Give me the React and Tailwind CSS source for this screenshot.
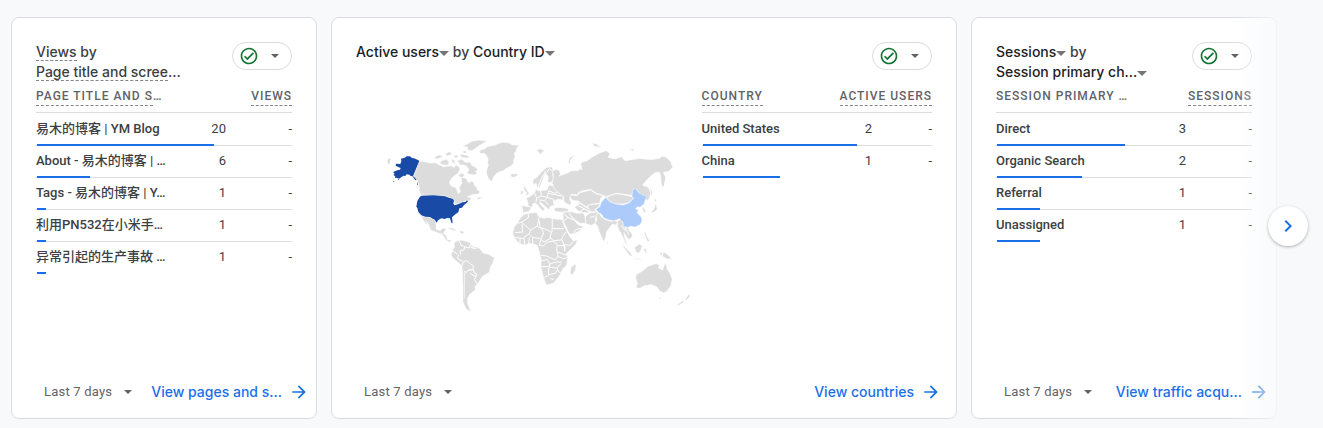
import React from "react";

const LAND = "#dcdcdc";

function Caret({ className = "" }) {
  return (
    <svg className={"inline-block shrink-0 " + className} viewBox="0 0 10 5" aria-hidden="true">
      <path d="M0 0h10L5 5z" fill="currentColor" />
    </svg>
  );
}

function StatusButton() {
  return (
    <button
      type="button"
      aria-label="Data quality"
      className="flex h-7 w-[60px] shrink-0 items-center justify-between rounded-full border border-[#dadce0] bg-white pr-3 pl-[6px]"
    >
      <svg className="size-5" viewBox="0 0 24 24" fill="#137333" aria-hidden="true">
        <path d="M12 2C6.48 2 2 6.48 2 12s4.48 10 10 10 10-4.48 10-10S17.52 2 12 2zm0 18c-4.41 0-8-3.59-8-8s3.59-8 8-8 8 3.59 8 8-3.59 8-8 8zm4.59-12.42L10 14.17l-2.59-2.58L6 13l4 4 8-8z" />
      </svg>
      <Caret className="h-1 w-2 text-[#5f6368]" />
    </button>
  );
}

function PickerButton({ children }) {
  return (
    <button type="button" className="whitespace-nowrap text-[#202124]">
      {children}
      <Caret className="h-[5px] w-[10px] align-middle text-[#757575]" />
    </button>
  );
}

function Underlined({ children }) {
  return <span className="border-b border-dashed border-[#80868b]">{children}</span>;
}

function HeaderLabel({ children }) {
  return <span className="inline-block border-b border-dashed border-[#80868b] leading-[18px]">{children}</span>;
}

function MetricTable({ dimension, metric, rows, scale, changeColumn = "w-[66px]" }) {
  const max = rows[0].value;
  const cell = "border-b border-[#dadce0] p-0 pb-0.5 group-first:pb-px group-last:border-transparent";
  return (
    <table className="w-full table-fixed border-separate border-spacing-0 text-[#3c4043]">
      <colgroup>
        <col />
        <col className="w-10" />
        <col className={changeColumn} />
      </colgroup>
      <thead>
        <tr className="h-[31px] text-[12px] tracking-[1px] whitespace-nowrap text-[#5f6368]">
          <th scope="col" className="border-b border-[#dadce0] p-0 pb-0.5 text-left align-middle font-medium">
            {dimension}
          </th>
          <th scope="col" colSpan={2} className="border-b border-[#dadce0] p-0 pb-0.5 text-right align-middle font-medium">
            <div className="flex justify-end">{metric}</div>
          </th>
        </tr>
      </thead>
      <tbody>
        {rows.map((row) => (
          <tr key={row.name} className="group relative h-8 text-[13px] leading-4 first:h-[33px]">
            <th scope="row" className={cell + " text-left font-medium whitespace-nowrap"}>
              {row.name}
              <span
                className="absolute bottom-0 left-px h-0.5 bg-[#1a6fe8]"
                style={{ width: `${(row.value / max) * scale}%` }}
              />
            </th>
            <td className={cell + " text-right"}>{row.value}</td>
            <td className={cell + " text-right"}>-</td>
          </tr>
        ))}
      </tbody>
    </table>
  );
}

function CardFooter({ label, wide = false }) {
  return (
    <div className={wide ? "mt-auto flex items-center justify-between pr-4 pl-8" : "mt-auto flex items-center justify-between pr-2 pl-8"}>
      <button type="button" className="flex items-center gap-3 text-[13px] leading-5 tracking-[0.2px] whitespace-nowrap text-[#5f6368]">
        Last 7 days
        <Caret className="h-1 w-2" />
      </button>
      <a href="#" className="flex items-center gap-2 font-['Inter','Roboto',sans-serif] text-sm leading-5 font-medium whitespace-nowrap text-[#1a6fe8]">
        {label}
        <svg className="size-[18px]" viewBox="0 0 24 24" fill="currentColor" aria-hidden="true">
          <path d="M12 3l-1.6 1.6 6.3 6.3H3v2.2h13.700l-6.300 6.300L12 21l9-9z" />
        </svg>
      </a>
    </div>
  );
}

function Card({ title, children, footer }) {
  return (
    <section className="flex min-w-0 flex-col rounded-lg border border-[#dadce0] bg-white pt-6 pb-4">
      <div className="flex items-start justify-between px-6">
        <h2 className="h-10 font-['Inter','Roboto',sans-serif] text-sm leading-5 font-medium whitespace-nowrap text-[#3c4043]">{title}</h2>
        <StatusButton />
      </div>
      <div className="px-6">{children}</div>
      {footer}
    </section>
  );
}

function WorldMap() {
  return (
    <svg viewBox="0 0 960 570" className="mt-12 ml-6 w-80 max-w-full" role="img" aria-label="Active users by country">
      <g fill={LAND} stroke="#fff" strokeWidth="1" strokeLinejoin="round">
        <path d="M118 94L140 97L150 100L165 98L178 105L190 111L200 109L215 108L222 113L228 105L236 110L240 118L234 130L222 138L212 148L208 158L213 168L228 174L235 192L241 186L238 172L246 160L243 143L258 145L262 153L268 160L272 154L280 155L284 168L290 170L290 178L299 184L296 192L280 193L262 200L274 205L268 214L262 210L250 216L236 221L224 221L222 210L207 202L195 198L124 195L118 182L117 165L111 150L101 139Z" />
        <path d="M183 94L198 88L207 96L204 105L188 104L180 100ZM163 82l14-7 12 4-8 4-12 4zM232 92L245 88L258 98L270 96L275 106L286 112L294 120L286 124L292 130L284 134L268 133L260 128L268 120L260 108L250 104L242 106ZM248 48L262 42L276 34L296 31L320 32L312 38L298 46L288 54L276 62L262 60L264 52ZM240 72l10 2 18 4-4 6-20-2zM196 72l10-6 10 3-4 6-12 2zM214 88l8 2 4 12-8-4zM236 134l8-4 10 4-6 8-10-2zM222 76l10 0 2 6-8 2zM250 62l10 2-2 6-8-2z" />
        <path d="M298 62L318 55L322 50L345 46L358 40L370 37L390 40L396 45L418 46L410 54L408 64L402 70L405 80L400 92L401 100L392 108L380 114L370 122L362 124L350 130L340 142L335 155L327 148L322 138L319 125L322 114L326 106L323 98L325 90L320 76L312 70L300 70Z" />
        <path d="M391 134l6-3 6 2 6-3 4 4-4 5-8 3-7-2zM290 204l10-2 6 1-6 4-8 0zM22 90l6-6 4 4-2 12-6 4z" />
        <path d="M124 257L136 261L150 262L158 267L166 272L168 284L168 298L180 302L188 295L199 296L190 309L183 312L168 306L152 300L146 283L138 272L144 288L132 274Z" />
        <path d="M180 309l12 2 8 8 2 10 12 2-6 6-10-8-8-12zM202 292l14 2 14 6-8 2-14-6zM238 303l10 1 6 4-10 3z" />
        <path d="M234 332L245 331L268 337L275 347L290 352L300 356L308 368L328 374L343 383L338 400L331 410L328 427L308 438L300 450L291 463L285 470L286 480L270 492L262 505L262 520L268 534L272 545L258 536L249 515L249 480L248 430L246 407L230 394L218 382L214 377L217 362L224 350L222 338Z" />
      </g>
      <g fill="none" stroke="#fff" strokeWidth="3" strokeLinejoin="round">
        <path d="M238 333L242 345L254 350L252 360L240 362L242 374M216 363L228 368L236 376L232 384L240 390L248 393M246 407L250 395L260 392L272 402L280 408L279 418L264 420L260 427L252 425M266 421L280 419L282 428L291 433L286 439L270 430M290 435L283 448L292 463M254 350L268 354L272 340M272 352L290 356M280 350v8" />
        <path strokeWidth="2" d="M252 425L254 440L253 470L253 505" />
      </g>
      <g fill="#194ba6">
        <path d="M63 86L74 83L80 79L90 79L95 83L106 86L118 92L99 139L92 138L88 134L80 133L76 138L70 137L64 142L57 146L50 143L44 144L46 139L40 135L44 131L39 126L52 121L60 119L62 114L56 112L47 107L48 101L61 102L64 94ZM97 138l5 2 8 9-4 2zM111 156l3 8-3 0zM40 153l4 2-4 1zM54 147l4 2-4 2zM124 197L160 196L195 199L207 203L219 207L222 212L220 221L224 226L236 222L248 217L256 216L261 211L264 214L260 219L252 225L246 233L238 235L235 247L226 253L216 262L218 280L214 278L210 265L202 264L194 267L184 265L174 271L170 278L164 269L158 266L150 261L136 260L124 256L115 246L112 234L109 230L112 213L117 205L120 200Z" />
      </g>
      <g transform="translate(360 0)">
        <g fill={LAND} stroke="#fff" strokeWidth="2" strokeLinejoin="round">
          <path d="M72 253L85 250L110 247L115 258L130 265L145 262L158 266L180 268L190 270L188 275L194 290L203 308L210 320L220 332L233 330L228 342L212 358L200 370L203 385L200 405L188 418L182 432L172 446L160 460L142 465L137 462L130 440L122 410L124 390L118 368L115 355L110 345L100 342L88 340L75 345L60 342L50 332L42 322L38 310L42 292L52 280L60 265Z" />
          <path d="M100 165L98 150L110 142L125 125L140 112L155 110L160 120L158 135L165 150L150 158L142 155L145 140L136 130L130 145L126 155L118 175L112 172L108 160Z" />
          <path d="M65 232L64 226L85 230L82 212L78 205L92 198L104 188L108 176L114 182L140 180L148 165L160 168L172 185L190 195L188 210L172 208L160 215L163 225L150 230L148 240L138 232L128 222L118 215L122 224L136 238L128 243L118 232L108 220L100 220L96 232L85 245L70 248L64 244Z" />
          <path d="M70 165L78 175L88 192L76 198L80 188L72 180ZM62 182l8 1-1 9-8 1z" />
          <path d="M160 236L172 232L190 233L205 236L205 244L185 247L168 245Z" />
          <path d="M188 248L206 244L212 256L222 270L232 282L250 290L240 302L222 312L208 312L200 295L190 275Z" />
          <path d="M206 244L218 246L232 250L250 248L256 262L258 280L240 280L225 270L212 256Z" />
          <path d="M224 232L240 220L255 230L272 240L268 248L250 248L236 244Z" />
          <path d="M262 230L268 224L300 221L298 230L285 238L290 246L272 245Z" />
          <path d="M256 260L270 248L288 246L297 250L286 264L288 278L275 286L258 282Z" />
          <path d="M178 122L182 133L176 138L188 134L200 130L215 122L235 122L240 115L246 120L242 100L250 95L262 92L275 82L300 68L318 62L330 70L325 82L345 86L365 80L375 92L400 88L420 85L440 88L460 88L480 84L486 78L500 82L512 95L519 112L505 125L490 127L497 142L493 165L488 173L483 160L482 140L478 126L465 128L450 140L432 160L428 165L445 172L453 190L447 208L440 212L432 197L420 192L408 177L400 177L398 196L385 195L350 190L330 196L318 200L305 195L290 190L272 178L250 182L236 187L232 195L215 193L209 205L215 222L206 224L195 218L190 210L192 200L180 192L172 185L162 175L156 160L160 140L158 122L170 118Z" />
          <path d="M215 195L232 197L238 188L272 180L290 192L310 197L302 205L300 219L280 222L268 224L258 230L240 218L232 222L238 214L222 212L216 210L210 202Z" />
          <path d="M320 202L335 195L352 191L385 197L398 200L400 205L388 217L372 222L345 222L328 214Z" />
          <path d="M288 254L298 250L304 260L314 268L335 274L345 272L354 275L347 286L338 282L330 292L320 305L318 318L313 335L308 330L298 305L292 288L285 280L290 270Z" />
          <path d="M352 275L362 268L370 280L375 292L385 294L388 302L398 315L394 325L385 328L378 318L372 308L374 322L382 345L376 340L368 320L362 308L356 300L352 288ZM318 334l6 4-3 6z" />
          <path d="M364 343L376 352L392 368L399 381L388 376L375 358ZM400 383l24 4 0 3-24-4zM404 352L418 342L427 348L422 362L416 370L407 366ZM430 357l12-3-4 6 4 10-5 0-4-8zM476 368L495 368L508 378L516 388L500 386L488 380ZM432 306l6 2 2 10 10 16-8 0-6-12z" />
          <path d="M462 206l11 3-8 7zM468 218L472 238L462 247L450 249L460 240L464 230ZM426 231l7 2 5 14-8 0zM450 168L457 185L457 202L452 190z" />
          <path d="M408 435L428 422L445 408L455 405L468 400L478 406L475 414L488 420L494 400L498 402L502 418L510 430L517 448L512 468L500 485L490 489L478 482L470 470L452 464L432 468L420 475L408 474L412 460L407 445Z" />
          <path d="M477 502l9-1-4 7zM530 525L548 512L553 515L535 527ZM556 508L566 493L571 497L560 511zM228 400L227 418L218 435L210 430L213 412Z" />
          <path d="M109 60l12-4 8 4 10-2-12 8-4 8zM205 98L208 84L228 72L212 90L210 101ZM274 38L290 42L304 52L285 50zM386 56l22 2-10 5z" />
        </g>
        <path
          fill="none"
          stroke="#fff"
          strokeWidth="3"
          strokeLinejoin="round"
          d="M84 250L86 262L66 276L52 280M66 278L92 300L112 288L118 260M66 282L68 306L44 308M92 300L88 312L76 318L72 326L58 324L44 322M118 272L120 292L132 296L154 306M157 266L156 306M157 296L192 296M112 290L128 298L130 312L122 326L98 322L90 314M154 306L150 326L132 336L124 328M98 322L98 342M88 322L86 340M72 326L74 344M60 326L60 342M124 326L118 346L130 348M150 322L160 332L184 330L190 316L198 306M186 330L192 344L210 346L220 334M130 348L142 336L160 334L172 344L170 356L174 378L166 390L140 378L122 376M172 348L194 346L196 358M174 366L200 376M176 380L190 386L204 382M124 392L142 388L148 400L150 410L124 410M150 402L168 396L184 396M148 412L170 414L184 400M170 414L176 426L184 428M146 414L146 436L134 442M146 434L166 430L174 416M150 446L162 448M192 346L194 364M104 190L110 204L108 216M84 228L98 234M66 230L68 248M122 182L124 198L110 204M124 198L142 202L146 182M142 202L134 212L118 210M142 202L160 208L164 222M134 212L146 226M146 182L164 190L172 186M146 190L186 198M114 172L122 150L138 122M140 128L148 116L156 122M146 160L160 164M190 250L204 262L220 270M204 262L192 272M222 310L226 300L244 294M240 244L254 236M232 226L252 236L270 246M270 262L284 258M364 286L376 302M376 294L386 314M488 368V384M384 370l2 4"
        />
        <path
          fill="#adcbfa"
          stroke="#fff"
          strokeWidth="1"
          d="M318 202L327 214L345 222L370 225L388 218L402 204L396 200L398 180L406 175L418 190L432 196L440 200L436 210L432 222L420 232L412 230L406 237L415 240L411 248L424 262L426 272L420 284L404 291L392 288L385 292L372 290L368 275L358 266L342 272L328 270L312 264L304 252L296 248L288 238L300 230L303 218L310 210Z"
        />
      </g>
    </svg>
  );
}

const pages = [
  { name: "易木的博客 | YM Blog", value: 20 },
  { name: "About - 易木的博客 | …", value: 6 },
  { name: "Tags - 易木的博客 | Y…", value: 1 },
  { name: "利用PN532在小米手…", value: 1 },
  { name: "异常引起的生产事故 …", value: 1 },
];

const countries = [
  { name: "United States", value: 2 },
  { name: "China", value: 1 },
];

const channels = [
  { name: "Direct", value: 3 },
  { name: "Organic Search", value: 2 },
  { name: "Referral", value: 1 },
  { name: "Unassigned", value: 1 },
];

export default function App() {
  return (
    <main className="relative flex min-h-screen flex-col bg-[#f8f9fb] pt-[17px] pr-[46px] pb-[9px] pl-[11px] font-['Roboto','Noto_Sans_CJK_SC',sans-serif]">
      <div className="grid flex-1 grid-cols-[306fr_626fr_306fr] gap-[14px]">
        <Card
          title={
            <>
              <Underlined>Views</Underlined> by
              <br />
              <Underlined>Page title and scree</Underlined>…
            </>
          }
          footer={<CardFooter label="View pages and s…" />}
        >
          <MetricTable
            dimension={<><HeaderLabel>PAGE TITLE AND S</HeaderLabel>…</>}
            metric={<HeaderLabel>VIEWS</HeaderLabel>}
            rows={pages}
            scale={69}
          />
        </Card>

        <Card
          title={
            <>
              <PickerButton>Active users</PickerButton> by <PickerButton>Country ID</PickerButton>
            </>
          }
          footer={<CardFooter label="View countries" wide />}
        >
          <div className="grid grid-cols-[3fr_2fr] items-start">
            <WorldMap />
            <MetricTable
              dimension={<HeaderLabel>COUNTRY</HeaderLabel>}
              metric={<HeaderLabel>ACTIVE USERS</HeaderLabel>}
              rows={countries}
              scale={67}
              changeColumn="w-[60px]"
            />
          </div>
        </Card>

        <Card
          title={
            <>
              <PickerButton>Sessions</PickerButton> by
              <br />
              <PickerButton>Session primary ch…</PickerButton>
            </>
          }
          footer={<CardFooter label="View traffic acqu…" />}
        >
          <MetricTable
            dimension="SESSION PRIMARY …"
            metric={<HeaderLabel>SESSIONS</HeaderLabel>}
            rows={channels}
            scale={50}
          />
        </Card>
      </div>

      <div className="pointer-events-none absolute inset-y-0 right-0 w-[88px] bg-linear-to-r from-[#f8f9fb]/0 to-[#f8f9fb] to-60%" />
      <button
        type="button"
        aria-label="Next cards"
        className="absolute top-[206px] right-[15px] flex size-10 items-center justify-center rounded-full bg-white text-[#1a6fe8] shadow-[0_1px_3px_rgba(60,64,67,0.4)]"
      >
        <svg className="size-6" viewBox="0 0 24 24" fill="currentColor" aria-hidden="true">
          <path d="M10 6L8.590 7.410 13.170 12l-4.580 4.590L10 18l6-6z" />
        </svg>
      </button>
    </main>
  );
}
